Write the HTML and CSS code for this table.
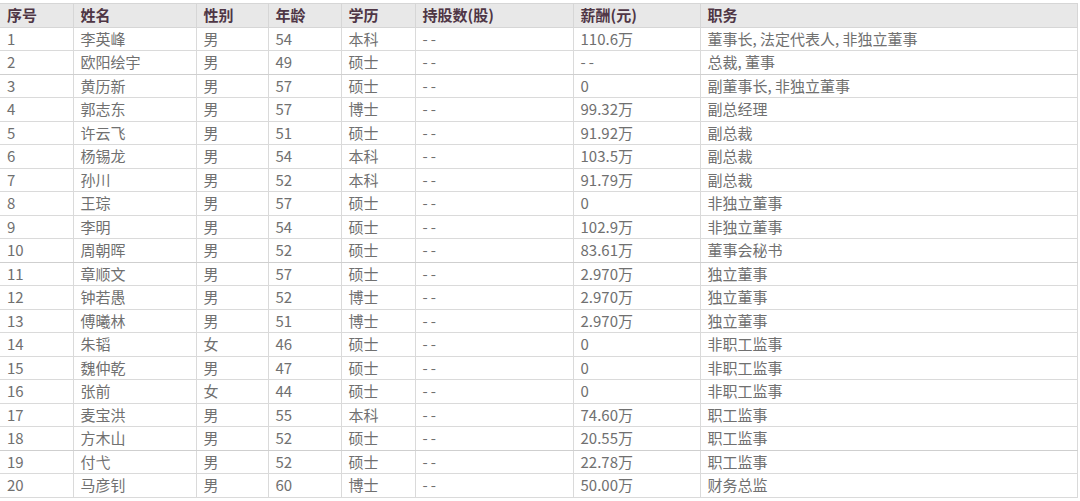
FILE: index.html
```html
<!DOCTYPE html>
<html lang="zh-CN">
<head>
<meta charset="utf-8">
<title>董监高信息</title>
<link rel="stylesheet" href="styles.css">
</head>
<body>
<table class="grid">
<colgroup>
<col class="c-no"><col class="c-name"><col class="c-sex"><col class="c-age"><col class="c-edu"><col class="c-share"><col class="c-pay"><col class="c-role">
</colgroup>
<thead>
<tr><th>序号</th><th>姓名</th><th>性别</th><th>年龄</th><th>学历</th><th>持股数(股)</th><th>薪酬(元)</th><th>职务</th></tr>
</thead>
<tbody>
<tr><td>1</td><td>李英峰</td><td>男</td><td>54</td><td>本科</td><td class="dash">--</td><td>110.6万</td><td>董事长, 法定代表人, 非独立董事</td></tr>
<tr class="thick"><td>2</td><td>欧阳绘宇</td><td>男</td><td>49</td><td>硕士</td><td class="dash">--</td><td class="dash">--</td><td>总裁, 董事</td></tr>
<tr><td>3</td><td>黄历新</td><td>男</td><td>57</td><td>硕士</td><td class="dash">--</td><td>0</td><td>副董事长, 非独立董事</td></tr>
<tr><td>4</td><td>郭志东</td><td>男</td><td>57</td><td>博士</td><td class="dash">--</td><td>99.32万</td><td>副总经理</td></tr>
<tr><td>5</td><td>许云飞</td><td>男</td><td>51</td><td>硕士</td><td class="dash">--</td><td>91.92万</td><td>副总裁</td></tr>
<tr><td>6</td><td>杨锡龙</td><td>男</td><td>54</td><td>本科</td><td class="dash">--</td><td>103.5万</td><td>副总裁</td></tr>
<tr><td>7</td><td>孙川</td><td>男</td><td>52</td><td>本科</td><td class="dash">--</td><td>91.79万</td><td>副总裁</td></tr>
<tr><td>8</td><td>王琮</td><td>男</td><td>57</td><td>硕士</td><td class="dash">--</td><td>0</td><td>非独立董事</td></tr>
<tr><td>9</td><td>李明</td><td>男</td><td>54</td><td>硕士</td><td class="dash">--</td><td>102.9万</td><td>非独立董事</td></tr>
<tr class="thick"><td>10</td><td>周朝晖</td><td>男</td><td>52</td><td>硕士</td><td class="dash">--</td><td>83.61万</td><td>董事会秘书</td></tr>
<tr><td>11</td><td>章顺文</td><td>男</td><td>57</td><td>硕士</td><td class="dash">--</td><td>2.970万</td><td>独立董事</td></tr>
<tr><td>12</td><td>钟若愚</td><td>男</td><td>52</td><td>博士</td><td class="dash">--</td><td>2.970万</td><td>独立董事</td></tr>
<tr><td>13</td><td>傅曦林</td><td>男</td><td>51</td><td>博士</td><td class="dash">--</td><td>2.970万</td><td>独立董事</td></tr>
<tr><td>14</td><td>朱韬</td><td>女</td><td>46</td><td>硕士</td><td class="dash">--</td><td>0</td><td>非职工监事</td></tr>
<tr><td>15</td><td>魏仲乾</td><td>男</td><td>47</td><td>硕士</td><td class="dash">--</td><td>0</td><td>非职工监事</td></tr>
<tr><td>16</td><td>张前</td><td>女</td><td>44</td><td>硕士</td><td class="dash">--</td><td>0</td><td>非职工监事</td></tr>
<tr><td>17</td><td>麦宝洪</td><td>男</td><td>55</td><td>本科</td><td class="dash">--</td><td>74.60万</td><td>职工监事</td></tr>
<tr class="thick"><td>18</td><td>方木山</td><td>男</td><td>52</td><td>硕士</td><td class="dash">--</td><td>20.55万</td><td>职工监事</td></tr>
<tr><td>19</td><td>付弋</td><td>男</td><td>52</td><td>硕士</td><td class="dash">--</td><td>22.78万</td><td>职工监事</td></tr>
<tr><td>20</td><td>马彦钊</td><td>男</td><td>60</td><td>博士</td><td class="dash">--</td><td>50.00万</td><td>财务总监</td></tr>
</tbody>
</table>
</body>
</html>
```
FILE: styles.css
```css
html, body {
  margin: 0;
  padding: 0;
  background: #ffffff;
}
body {
  padding-top: 3px;
  font-family: "Noto Sans CJK SC", "DejaVu Sans", sans-serif;
}
.grid {
  width: 1078px;
  border-collapse: collapse;
  table-layout: fixed;
  font-size: 15px;
}
.c-no { width: 73px; }
.c-name { width: 123px; }
.c-sex { width: 72px; }
.c-age { width: 73px; }
.c-edu { width: 74px; }
.c-share { width: 158px; }
.c-pay { width: 127px; }
.c-role { width: auto; }
.grid th,
.grid td {
  height: 22.5px;
  padding: 0 7px;
  border: 1px solid #dadada;
  text-align: left;
  white-space: nowrap;
  line-height: 22px;
}
.grid th:first-child,
.grid td:first-child {
  border-left: none;
}
.grid th {
  background: #e8e8e8;
  color: #4f3645;
  font-weight: 700;
  font-size: 15px;
  border-color: #d6d6d6;
}
.grid td {
  color: #707070;
  font-weight: 400;
}
.grid td.dash {
  letter-spacing: 3px;
}
.grid tr.thick td {
  border-bottom-color: #cfcfcf;
}
```
